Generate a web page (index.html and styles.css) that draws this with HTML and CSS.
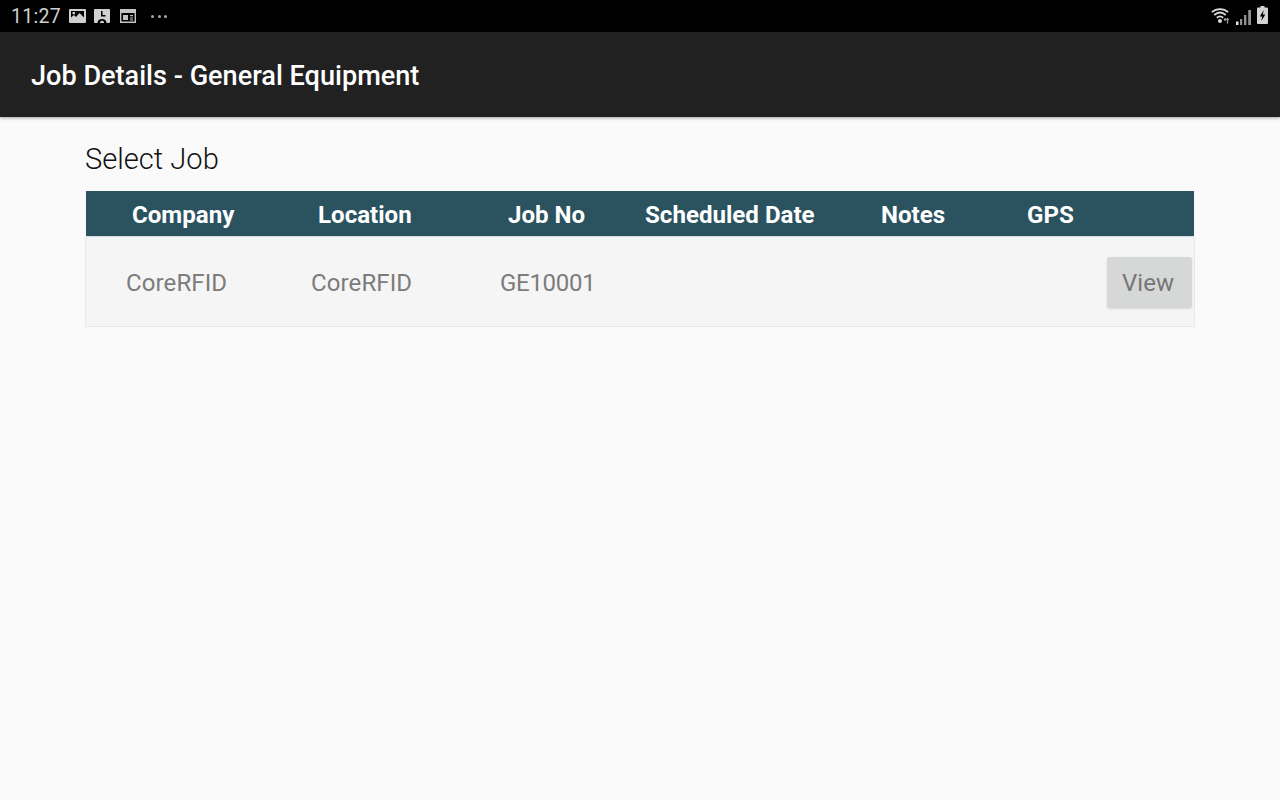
FILE: index.html
```html
<!DOCTYPE html>
<html lang="en">
<head>
<meta charset="utf-8">
<title>Job Details - General Equipment</title>
<link rel="stylesheet" href="styles.css">
</head>
<body>
<div class="status">
  <div class="status-left">
    <span class="time">11:27</span>
    <svg class="ic" width="17" height="14" viewBox="0 0 17 14"><path fill="#cfcfcf" fill-rule="evenodd" d="M1 0h15a1 1 0 0 1 1 1v12a1 1 0 0 1-1 1H1a1 1 0 0 1-1-1V1a1 1 0 0 1 1-1zM2 2v6.500L5 6l2 2 3.500-4 4.500 4.500V2z"/><path fill="#cfcfcf" d="M3.500 3h2.500v2.200H3.500z"/></svg>
    <svg class="ic ic2" width="16" height="14" viewBox="0 0 16 14"><path fill="#d0d0d0" fill-rule="evenodd" d="M1 0h14a1 1 0 0 1 1 1v12a1 1 0 0 1-1 1h-2.500c0-2.800-2-4-4.500-4s-4.500 1.200-4.500 4H1a1 1 0 0 1-1-1V1a1 1 0 0 1 1-1zM7 2v5.500h4.500V6H8.500V2z"/><path fill="#d0d0d0" d="M6 14c0-1.400.8-2.300 2-2.300s2 .9 2 2.300z"/></svg>
    <svg class="ic ic3" width="16" height="14" viewBox="0 0 16 14"><path fill="none" stroke="#c4c4c4" stroke-width="1.400" d="M.7.7h14.600v12.600H.7z"/><path fill="#c4c4c4" d="M1 1h14v3H1zM3 6h5v5H3zM10 6h3v1.300h-3zM10 8.400h3v1.200h-3zM10 10.500h3v1h-3z"/></svg>
    <span class="dots"><i></i><i></i><i></i></span>
  </div>
  <div class="status-right">
    <svg class="wifi" width="20" height="17" viewBox="0 0 20 17"><path fill="none" stroke="#dcdcdc" stroke-width="1.800" d="M.8 5.200C5.500 1 12.500 1 17.200 5.200M3.300 8C6.800 5 11.200 5 14.700 8M5.800 10.700c2-1.600 4.400-1.600 6.400 0"/><circle cx="9" cy="14" r="2" fill="#dcdcdc"/><circle cx="14" cy="12.500" r="1.300" fill="#aaa"/><path fill="#999" d="M16.500 10.500l2 2.500h-1.300v3.500h-1.400V13h-1.300z"/></svg>
    <svg class="bars" width="15" height="15" viewBox="0 0 15 15"><path fill="#909090" d="M4 9h2.200v6H4zM8 5h2.400v10H8zM12.200 0H15v15h-2.800z"/><path fill="#e4e4e4" d="M0 11.500h2.500V15H0z"/></svg>
    <svg class="batt" width="11" height="18" viewBox="0 0 11 18"><path fill="#d4d4d4" fill-rule="evenodd" d="M3.500 0h4v1.500H10a1 1 0 0 1 1 1V17a1 1 0 0 1-1 1H1a1 1 0 0 1-1-1V2.500a1 1 0 0 1 1-1h2.500zM6.800 4L2.800 10.500h2.400L4.300 15l4-6.500H5.800z"/></svg>
  </div>
</div>
<header class="appbar">Job Details - General Equipment</header>
<main class="content">
  <h1 class="title">Select Job</h1>
  <div class="table">
    <div class="row head">
      <div class="h-company">Company</div>
      <div class="h-location">Location</div>
      <div class="h-jobno">Job No</div>
      <div class="h-date">Scheduled Date</div>
      <div class="h-notes">Notes</div>
      <div class="h-gps">GPS</div>
    </div>
    <div class="row body">
      <div class="c-company">CoreRFID</div>
      <div class="c-location">CoreRFID</div>
      <div class="c-jobno">GE10001</div>
      <button class="view">View</button>
    </div>
  </div>
</main>
</body>
</html>
```
FILE: styles.css
```css
* { box-sizing: border-box; }
html, body { margin: 0; height: 100%; }
body {
  width: 1280px;
  height: 800px;
  overflow: hidden;
  background: #fafafa;
  font-family: Roboto, "Liberation Sans", sans-serif;
  display: flex;
  flex-direction: column;
}
.status {
  height: 32px;
  background: #000;
  display: flex;
  justify-content: space-between;
  align-items: center;
  padding: 0 12px 0 11px;
}
.status-left, .status-right { display: flex; align-items: center; }
.time {
  color: #d0d0d0;
  font-size: 19.5px;
  letter-spacing: 0.3px;
  margin-right: 8px;
}
.ic { margin-right: 8px; }
.ic2 { margin-right: 10px; }
.ic3 { margin-right: 15px; }
.dots { display: flex; gap: 3.500px; margin-top: 0; }
.dots i { width: 3px; height: 3px; border-radius: 50%; background: #a8a8a8; }
.wifi { margin-right: 5px; margin-top: -2px; }
.bars { margin-right: 6px; margin-top: 2px; }
.batt { margin-top: -2px; }
.appbar {
  height: 85px;
  background: #212121;
  color: #fff;
  font-size: 27.100px;
  font-weight: 500;
  line-height: 89px;
  padding-left: 31px;
  box-shadow: 0 1px 3px rgba(0,0,0,.35);
}
.content { padding: 24px 85px 0; }
.title {
  margin: 0 0 13px;
  font-size: 29.100px;
  font-weight: 300;
  line-height: 37px;
  color: #111;
}
.table { width: 1110px; }
.row { position: relative; display: grid; align-items: center; }
.head {
  height: 46px;
  margin-left: 1px;
  margin-right: 1px;
  background: #2a525f;
  color: #fff;
  font-size: 24.100px;
  font-weight: 700;
  grid-template-columns: 46px 186px 190px 137px 236px 146px 1fr;
  padding-top: 2px;
  border-bottom: 1px solid #d5dfe3;
}
.head div { white-space: nowrap; }
.h-company { grid-column: 2; }
.h-location { grid-column: 3; }
.h-jobno { grid-column: 4; }
.h-date { grid-column: 5; }
.h-notes { grid-column: 6; }
.h-gps { grid-column: 7; }
.body {
  height: 90px;
  background: #f5f5f5;
  border: 1px solid #e8e8e8;
  border-top: 0;
  color: #7c7c7c;
  font-size: 24px;
  grid-template-columns: 40px 185px 189px 605px 1fr;
  padding-top: 3px;
}
.c-company { grid-column: 2; letter-spacing: .12px; }
.c-location { grid-column: 3; letter-spacing: .12px; }
.c-jobno { grid-column: 4; letter-spacing: -.3px; }
.view {
  grid-column: 5;
  justify-self: end;
  width: 85px;
  height: 51px;
  margin-right: 2px;
  margin-top: -1px;
  border: 0;
  border-radius: 3px;
  background: #d6d7d7;
  color: #767676;
  font-family: inherit;
  font-size: 24px;
  padding: 0 3px 0 0;
  box-shadow: 0 1px 2px rgba(0,0,0,.12);
}
```
